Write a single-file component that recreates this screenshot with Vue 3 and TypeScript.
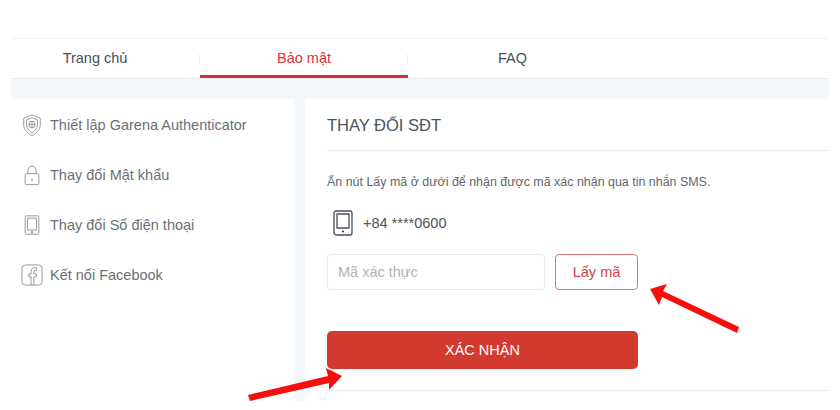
<script setup lang="ts">
const menu = [
  { label: 'Thiết lập Garena Authenticator', icon: 'shield' },
  { label: 'Thay đổi Mật khẩu', icon: 'lock' },
  { label: 'Thay đổi Số điện thoại', icon: 'phone' },
  { label: 'Kết nối Facebook', icon: 'facebook' },
]
</script>

<template>
  <div class="page">
    <nav class="tabs">
      <a class="tab first">Trang chủ</a>
      <a class="tab active">Bảo mật</a>
      <a class="tab">FAQ</a>
    </nav>

    <div class="content">
      <aside class="sidebar">
        <div v-for="item in menu" :key="item.label" class="menu-item">
          <svg class="menu-icon" viewBox="0 0 24 24" fill="none" stroke="#8c9196" stroke-width="1">
            <template v-if="item.icon === 'shield'">
              <path d="M12 1 21 4.500V12c0 5-4 9-9 11.500C7 21 3 17 3 12V4.500Z" />
              <path d="M12 4 18 6.500V12c0 3.500-2.500 6.500-6 8.500-3.500-2-6-5-6-8.500V6.500Z" />
              <circle cx="12" cy="11.500" r="3.500" />
              <path d="M12 7.500v8M8 11.500h8" />
            </template>
            <template v-else-if="item.icon === 'lock'">
              <rect x="4.500" y="10.500" width="15" height="12" rx="1.500" />
              <path d="M7.500 10.500V7a4.500 4.500 0 0 1 9 0v3.500" />
              <path d="M12 16v2" stroke-width="1.500" />
            </template>
            <template v-else-if="item.icon === 'phone'">
              <rect x="4.500" y="2" width="15" height="20" rx="1.500" />
              <path d="M7 4.500h10v13H7z" />
              <circle cx="12" cy="19.800" r=".8" fill="#8c9196" />
            </template>
            <template v-else>
              <rect x="1" y="1" width="22" height="22" rx="4" />
              <path d="M11 23v-9H8.500v-3H11V8c0-2.500 1.500-4 4-4h2v3h-1.500c-1 0-1.500.5-1.500 1.500V11h3l-.5 3H14v9" />
            </template>
          </svg>
          <span>{{ item.label }}</span>
        </div>
      </aside>

      <main class="panel">
        <h2 class="title">THAY ĐỔI SĐT</h2>
        <p class="desc">Ấn nút Lấy mã ở dưới để nhận được mã xác nhận qua tin nhắn SMS.</p>
        <div class="phone">
          <svg class="phone-icon" viewBox="0 0 20 26" fill="none" stroke="#4a5058" stroke-width="1.300">
            <rect x="1" y="1" width="18" height="24" rx="2" />
            <path d="M4 4h12v14H4z" />
            <circle cx="10" cy="21.500" r="1.100" fill="#333" stroke="none" />
          </svg>
          <span>+84 ****0600</span>
        </div>
        <div class="code-row">
          <input class="code-input" type="text" placeholder="Mã xác thực" />
          <button class="code-btn">Lấy mã</button>
        </div>
        <button class="submit">XÁC NHẬN</button>
        <div class="bottom-line"></div>
      </main>
    </div>

    <!-- red annotation arrows drawn over the screenshot -->
    <svg class="arrows" viewBox="0 0 840 410" fill="#f90d0d">
      <path d="M739 327 663 291 667 284 650 289 659 305 662 297 737 333Z" />
      <path d="M248 395 328 376 326 368 342 376 329 390 329 383 250 401Z" />
    </svg>
  </div>
</template>

<style scoped>
.page {
  position: relative;
  width: 840px;
  height: 410px;
  overflow: hidden;
  background: #fff;
  font-family: "Liberation Sans", Arial, sans-serif;
  color: #555d66;
  padding-top: 38px;
  box-sizing: border-box;
}

.tabs {
  display: flex;
  height: 41px;
  margin: 0 11px;
  box-sizing: border-box;
  border-top: 1px solid #eef2f5;
  border-bottom: 1px solid #e6edf2;
}

.tab {
  width: 209px;
  height: 37px;
  line-height: 38px;
  text-align: center;
  font-size: 14.500px;
  color: #48505a;
  position: relative;
}

.tab.first {
  width: 189px;
  padding-right: 21px;
  box-sizing: border-box;
}

.tab.active {
  color: #d8343a;
  height: 39px;
  border-bottom: 3px solid #d92f34;
  width: 208px;
  box-sizing: border-box;
}

.tab.first::after,
.tab.active::after {
  content: "";
  position: absolute;
  right: 0;
  top: 15px;
  height: 11px;
  width: 1px;
  background: #eef1f3;
}

.content {
  display: flex;
  gap: 11px;
  height: 322px;
  margin: 0 11px;
  padding-top: 20px;
  background: #f5f8fa;
  box-sizing: border-box;
}

.sidebar {
  width: 283px;
  background: #fff;
  padding-top: 1px;
  box-sizing: border-box;
}

.menu-item {
  display: flex;
  align-items: center;
  gap: 7px;
  height: 50px;
  padding-left: 10px;
  font-size: 14.500px;
  color: #6a7178;
}

.menu-icon {
  width: 22px;
  height: 24px;
  flex: none;
}

.panel {
  flex: 1;
  background: #fff;
  padding-left: 22px;
  box-sizing: border-box;
}

.title {
  margin: 0;
  height: 51px;
  line-height: 52px;
  font-size: 16.500px;
  font-weight: 400;
  color: #4c5560;
  border-bottom: 1px solid #eceff1;
}

.desc {
  margin: 22px 0 0;
  line-height: 18px;
  font-size: 12.450px;
  color: #5f666d;
}

.phone {
  display: flex;
  align-items: center;
  gap: 10px;
  margin-top: 19px;
  padding-left: 6px;
  font-size: 14.500px;
  color: #4c535b;
}

.phone-icon {
  width: 20px;
  height: 26px;
}

.code-row {
  display: flex;
  gap: 10px;
  margin-top: 18px;
}

.code-input {
  width: 218px;
  height: 36px;
  padding: 0 10px;
  border: 1px solid #e6e8ea;
  border-radius: 4px;
  font: inherit;
  font-size: 14.500px;
  box-sizing: border-box;
  outline: none;
}

.code-input::placeholder {
  color: #aeb3b8;
}

.code-btn {
  width: 83px;
  height: 36px;
  border: 1px solid #dd7276;
  border-radius: 4px;
  background: #fff;
  color: #cf4248;
  font: inherit;
  font-size: 14.500px;
  cursor: pointer;
}

.submit {
  display: block;
  width: 311px;
  height: 38px;
  margin-top: 41px;
  border: none;
  border-radius: 5px;
  background: #d43930;
  color: #fff;
  font: inherit;
  font-size: 14.500px;
  cursor: pointer;
}

.bottom-line {
  margin-top: 21px;
  height: 1px;
  background: #eceff1;
}

.arrows {
  position: absolute;
  left: 0;
  top: 0;
  width: 840px;
  height: 410px;
  pointer-events: none;
}
</style>

<style>
html, body { margin: 0; background: #fff; }
</style>
